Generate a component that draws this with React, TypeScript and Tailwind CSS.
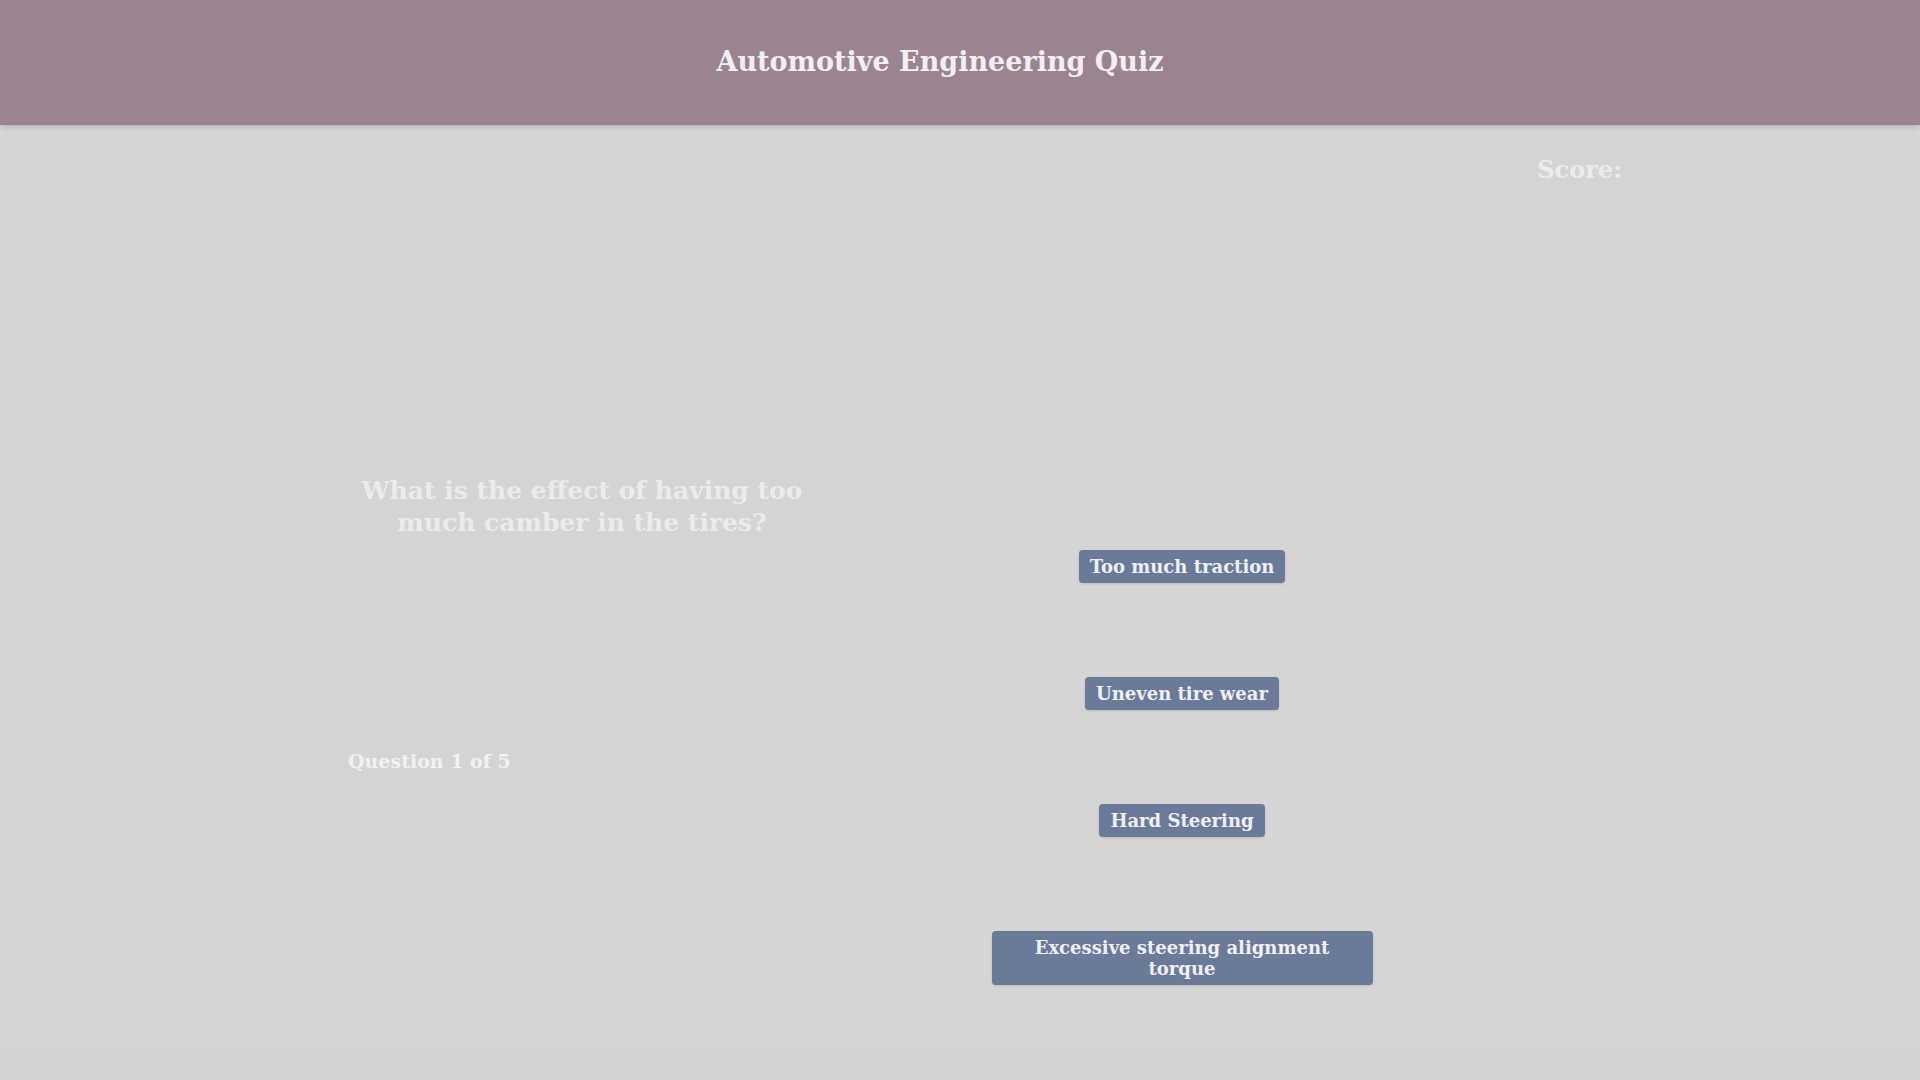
import React from "react";

const answers = [
  "Too much traction",
  "Uneven tire wear",
  "Hard Steering",
  "Excessive steering alignment torque",
];

const App: React.FC = () => {
  return (
    <div
      className="min-h-screen flex flex-col bg-[#d5d5d5]"
      style={{ fontFamily: '"DejaVu Serif", "Liberation Serif", serif' }}
    >
      <header className="h-[125px] bg-[#9b848f] flex items-center justify-center shadow-md">
        <h1 className="text-[27px] font-bold text-[#f3eef1] -ml-[40px]">
          Automotive Engineering Quiz
        </h1>
      </header>

      <main className="flex-1 flex flex-col">
        <div className="flex justify-end pr-[298px] pt-[29px]">
          <span className="text-[24px] leading-[32px] font-bold text-[#ececec]">
            Score:
          </span>
        </div>

        <div className="flex">
          <section className="ml-[348px] w-[468px] pt-[289px] flex flex-col">
            <h2 className="text-center text-[25px] leading-[32px] font-bold text-[#ececec]">
              What is the effect of having too much camber in the tires?
            </h2>
            <p className="mt-[210px] text-[19px] leading-[24px] font-bold text-[#f2f2f2]">
              Question 1 of 5
            </p>
          </section>

          <section className="ml-[166px] w-[400px] pt-[364px] flex flex-col items-center gap-[94px]">
            {answers.map((a) => (
              <button
                key={a}
                className="max-w-[381px] px-[11px] py-[6px] rounded-[4px] bg-[#6b7a99] text-center text-[18px] leading-[21px] font-bold text-[#eef0f5] shadow-sm"
              >
                {a}
              </button>
            ))}
          </section>
        </div>
      </main>

      <footer className="h-[33px] bg-[#d2d2d2]" />
    </div>
  );
};

export default App;
